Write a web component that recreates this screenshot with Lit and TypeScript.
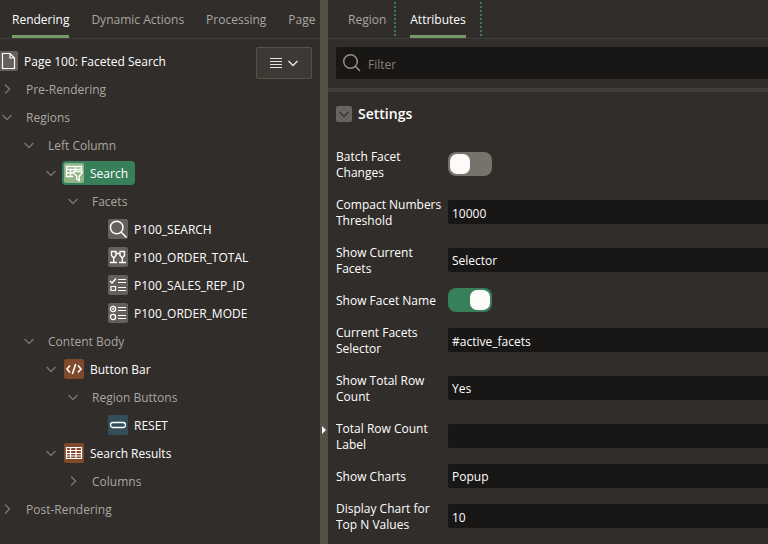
import { LitElement, html, css, svg, nothing } from "lit";
import { customElement, property, state } from "lit/decorators.js";
import { classMap } from "lit/directives/class-map.js";

const icons: Record<string, unknown> = {
  page: svg`<path d="M4.500 2.500h7.500l4.500 4.500v10.500h-12z M12 2.500v4.500h4.500" stroke-width="1.200"/>`,
  faceted: svg`<path d="M9 13.500H2.500v-10h15v4M2.500 6.500h15M2.500 10h6.500M6.500 6.500v7M11.500 4v4" stroke-width="1.300"/><path d="M9.500 8.500h8.500v1.500l-2.700 3v4.500l-2.600-1.500v-3l-3.200-3z" stroke-width="1.400"/>`,
  search: svg`<circle cx="8.700" cy="8.500" r="6.300" stroke-width="1.500"/><path d="M13.200 13.200L18.500 18.500" stroke-width="1.600"/>`,
  range: svg`<path d="M3.500 4.500h4.500v4l-2.250 2.500-2.250-2.500zM12 4.500h4.500v4l-2.250 2.500-2.250-2.500zM8 6.500h4M5.700 11v4M14.300 11v4M2 15.500h7M11 15.500h7" stroke-width="1.400"/>`,
  checklist: svg`<path d="M2 6l2 2 4-4.500" stroke-width="1.500"/><path d="M10 4.500h8M10 7.500h8M10 12.500h8M10 15.500h8M3 11.500h4.500v4H3z" stroke-width="1.200"/>`,
  radiolist: svg`<circle cx="5" cy="6" r="2.600" stroke-width="1.300"/><circle cx="5" cy="6" r=".6"/><circle cx="5" cy="14" r="2.600" stroke-width="1.300"/><path d="M10 4.500h8M10 7.500h8M10 12.500h8M10 15.500h8" stroke-width="1.200"/>`,
  code: svg`<path d="M6 6.500L3 10l3 3.500M14 6.500l3 3.500-3 3.500M11.700 5L8.300 15" stroke-width="1.600"/>`,
  button: svg`<rect x="2.500" y="7.500" width="15" height="5" rx="2.500" stroke-width="1.300"/>`,
  table: svg`<path d="M2.500 4.500h15v11h-15zM2.500 7.500h15M2.500 10.500h15M2.500 13h15M6.500 4.500v11M12 4.500v11" stroke-width="1.200"/>`,
};

interface TreeRow {
  label: string;
  depth: number;
  toggle?: "open" | "closed";
  icon?: string;
  tone?: "grey" | "lime" | "rust" | "teal";
}

const rows: TreeRow[] = [
  { label: "Pre-Rendering", depth: 0, toggle: "closed" },
  { label: "Regions", depth: 0, toggle: "open" },
  { label: "Left Column", depth: 1, toggle: "open" },
  { label: "Search", depth: 2, toggle: "open", icon: "faceted", tone: "lime" },
  { label: "Facets", depth: 3, toggle: "open" },
  { label: "P100_SEARCH", depth: 4, icon: "search", tone: "grey" },
  { label: "P100_ORDER_TOTAL", depth: 4, icon: "range", tone: "grey" },
  { label: "P100_SALES_REP_ID", depth: 4, icon: "checklist", tone: "grey" },
  { label: "P100_ORDER_MODE", depth: 4, icon: "radiolist", tone: "grey" },
  { label: "Content Body", depth: 1, toggle: "open" },
  { label: "Button Bar", depth: 2, toggle: "open", icon: "code", tone: "rust" },
  { label: "Region Buttons", depth: 3, toggle: "open" },
  { label: "RESET", depth: 4, icon: "button", tone: "teal" },
  { label: "Search Results", depth: 2, toggle: "open", icon: "table", tone: "rust" },
  { label: "Columns", depth: 3, toggle: "closed" },
  { label: "Post-Rendering", depth: 0, toggle: "closed" },
];

interface Field {
  id: string;
  label: string;
  kind: "switch" | "text" | "select";
  value?: string;
  on?: boolean;
}

const fields: Field[] = [
  { id: "batch", label: "Batch Facet Changes", kind: "switch", on: false },
  { id: "compact", label: "Compact Numbers Threshold", kind: "text", value: "10000" },
  { id: "current", label: "Show Current Facets", kind: "select", value: "Selector" },
  { id: "facetname", label: "Show Facet Name", kind: "switch", on: true },
  { id: "selector", label: "Current Facets Selector", kind: "text", value: "#active_facets" },
  { id: "total", label: "Show Total Row Count", kind: "select", value: "Yes" },
  { id: "totallabel", label: "Total Row Count Label", kind: "text", value: "" },
  { id: "charts", label: "Show Charts", kind: "select", value: "Popup" },
  { id: "topn", label: "Display Chart for Top N Values", kind: "text", value: "10" },
];

const shared = css`
  * { box-sizing: border-box; }
  button, input, select { font: inherit; color: inherit; margin: 0; }
  svg { display: block; fill: none; stroke: currentColor; }
`;

@customElement("tab-bar")
class TabBar extends LitElement {
  @property({ attribute: false }) tabs: string[] = [];
  @property() current = "";
  @property({ type: Boolean }) marked = false;

  static styles = [shared, css`
    :host { display: block; overflow: hidden; border-bottom: 1px solid #423e3a; }
    .bar { display: flex; height: 38px; padding-left: 12px; gap: 22px; }
    .bar.marked { padding-left: 20px; gap: 8px; }
    .tab {
      flex: none; height: 38px; padding: 5px 0 0; border: 0; background: none;
      color: #aaa6a1; border-bottom: 3px solid transparent; white-space: nowrap;
    }
    .tab.on { color: #fff; font-weight: 500; border-bottom-color: #759b67; }
    .slot { display: flex; }
    .marked .slot.on { gap: 14px; }
    .marked .slot.on::before, .marked .slot.on::after {
      content: ""; width: 2px;
      background: repeating-linear-gradient(transparent 0 2px, #35805a 2px 4px);
    }
  `];

  render() {
    return html`<div class=${classMap({ bar: true, marked: this.marked })} role="tablist">
      ${this.tabs.map((t) => {
        const on = t === this.current;
        return html`<div class=${classMap({ slot: true, on })}>
          <button class=${classMap({ tab: true, on })} role="tab" aria-selected=${on}
            @click=${() => (this.current = t)}>${t}</button>
        </div>`;
      })}
    </div>`;
  }
}

@customElement("page-tree")
class PageTree extends LitElement {
  @state() private selected = "Search";

  static styles = [shared, css`
    :host { display: block; padding-top: 8px; }
    .head { display: flex; justify-content: space-between; align-items: flex-start; height: 28px; padding-right: 8px; }
    .menu {
      display: flex; align-items: center; justify-content: center; gap: 4px;
      width: 56px; height: 32px; padding: 0; border: 1px solid #565049; border-radius: 2px;
      background: #3d3935; color: #e4e1dd;
    }
    .list { list-style: none; margin: 0; padding: 0; }
    .row { display: flex; align-items: center; height: 28px; }
    .toggle { display: flex; width: 18px; height: 16px; padding: 0; border: 0; background: none; color: #77726c; flex: none; }
    .node {
      display: flex; align-items: center; height: 24px; gap: 6px; padding: 0 7px 0 2px;
      border: 0; border-radius: 4px; background: none; color: #fff; white-space: nowrap;
      font-weight: 500;
    }
    .node.plain { padding-left: 8px; color: #aaa6a1; font-weight: 400; }
    .node.selected { background: #37805a; }
    .node.root { margin: 2px 0 0 -4px; }
    .name { padding-top: 2px; }
    .icon { width: 20px; height: 20px; border-radius: 2px; color: #fff; flex: none; }
    .grey { background: #65605b; }
    .lime { background: #8fb587; }
    .rust { background: #7f492c; }
    .teal { background: #344f59; }
  `];

  private icon(name: string, tone: string) {
    return html`<span class="icon ${tone}"><svg width="20" height="20" viewBox="0 0 20 20" aria-hidden="true">${icons[name]}</svg></span>`;
  }

  render() {
    return html`
      <div class="head">
        <button class="node root">${this.icon("page", "grey")}<span class="name">Page 100: Faceted Search</span></button>
        <button class="menu" aria-label="Tree options">
          <svg width="14" height="14" viewBox="0 0 14 14"><path d="M1 2.500h12M1 5.500h12M1 8.500h12M1 11.500h12"/></svg>
          <svg width="12" height="12" viewBox="0 0 12 12"><path d="M1.500 4L6 8.500 10.500 4" stroke-width="1.500"/></svg>
        </button>
      </div>
      <ul class="list" role="tree">
        ${rows.map((r) => html`
          <li class="row" role="treeitem" style="padding-left:${r.depth * 22}px">
            ${r.toggle
              ? html`<button class="toggle" aria-label="Toggle ${r.label}">
                  <svg width="16" height="16" viewBox="0 0 16 16" stroke-width="1.500">
                    <path d=${r.toggle === "open" ? "M2.500 6L7 10.500 11.500 6" : "M5 3.500L9.500 8 5 12.500"}/>
                  </svg></button>`
              : html`<span class="toggle"></span>`}
            <button class=${classMap({ node: true, plain: !r.icon, selected: r.label === this.selected })}
              @click=${() => (this.selected = r.label)}>
              ${r.icon ? this.icon(r.icon, r.tone ?? "grey") : nothing}<span class="name">${r.label}</span>
            </button>
          </li>`)}
      </ul>`;
  }
}

@customElement("property-editor")
class PropertyEditor extends LitElement {
  static styles = [shared, css`
    :host { display: block; }
    .filter {
      display: flex; align-items: center; gap: 6px; height: 32px; margin: 8px 0 9px 8px; padding-left: 6px;
      background: #181715; border-radius: 2px 0 0 2px; color: #94908b;
    }
    .query { flex: 1; min-width: 0; height: 32px; padding: 2px 0 0; border: 0; background: none; outline: 0; }
    .query::placeholder { color: #85817c; opacity: 1; }
    .group { border-top: 4px solid #403c38; padding: 0 0 4px 8px; }
    .heading { display: flex; align-items: center; gap: 6px; height: 44px; margin: 0 0 4px; font-size: 14px; font-weight: 600; }
    .fold { width: 16px; height: 16px; padding: 0; border: 0; border-radius: 2px; background: #68635e; color: #3b3733; }
    .field { display: grid; grid-template-columns: 112px 1fr; align-items: center; padding: 4px 0; }
    .label { padding: 5px 4px 3px 0; line-height: 16px; font-weight: 500; }
    .value {
      width: 100%; height: 24px; padding: 2px 4px 0; border: 0; border-radius: 2px 0 0 2px;
      background: #181715; appearance: none; font-weight: 500;
    }
    .switch {
      appearance: none; display: flex; width: 44px; height: 24px; padding: 2px;
      border-radius: 8px; background: #77726c;
    }
    .switch::before { content: ""; width: 20px; height: 20px; border-radius: 7px; background: #fcfbfa; }
    .switch:checked { background: #37805a; justify-content: flex-end; }
  `];

  private control(f: Field) {
    if (f.kind === "switch") return html`<input class="switch" type="checkbox" role="switch" id=${f.id} ?checked=${f.on}>`;
    if (f.kind === "select") return html`<select class="value" id=${f.id}><option>${f.value}</option></select>`;
    return html`<input class="value" type="text" id=${f.id} .value=${f.value ?? ""}>`;
  }

  render() {
    return html`
      <div class="filter">
        <svg width="20" height="20" viewBox="0 0 20 20" stroke-width="1.500"><circle cx="8.500" cy="8.500" r="6.800"/><path d="M13.300 13.300L18 18"/></svg>
        <input class="query" type="search" placeholder="Filter" aria-label="Filter">
      </div>
      <section class="group">
        <h2 class="heading">
          <button class="fold" aria-label="Collapse Settings"><svg width="16" height="16" viewBox="0 0 16 16"><path d="M3.500 6L8 10.500 12.500 6" stroke-width="1.500"/></svg></button>
          Settings
        </h2>
        ${fields.map((f) => html`<div class="field"><label class="label" for=${f.id}>${f.label}</label>${this.control(f)}</div>`)}
      </section>`;
  }
}

@customElement("app-root")
class AppRoot extends LitElement {
  static styles = [shared, css`
    :host {
      display: grid; grid-template-columns: 8fr 8px 11fr; min-height: 100vh;
      background: #312d2a; color: #fff; font: 12px/16px "Open Sans", "Noto Sans", sans-serif;
    }
    .pane { min-width: 0; }
    .splitter { position: relative; background: #565049; }
    .grip { position: absolute; top: 78%; left: 0; width: 8px; height: 12px; padding: 0; border: 0; background: none; color: #fff; }
  `];

  render() {
    return html`
      <main class="pane">
        <tab-bar .tabs=${["Rendering", "Dynamic Actions", "Processing", "Page"]} current="Rendering"></tab-bar>
        <page-tree></page-tree>
      </main>
      <div class="splitter">
        <button class="grip" aria-label="Collapse panel"><svg width="8" height="12" viewBox="0 0 8 12"><path d="M2 2l4 4-4 4z" fill="currentColor" stroke="none"/></svg></button>
      </div>
      <aside class="pane">
        <tab-bar .tabs=${["Region", "Attributes"]} current="Attributes" marked></tab-bar>
        <property-editor></property-editor>
      </aside>`;
  }
}
